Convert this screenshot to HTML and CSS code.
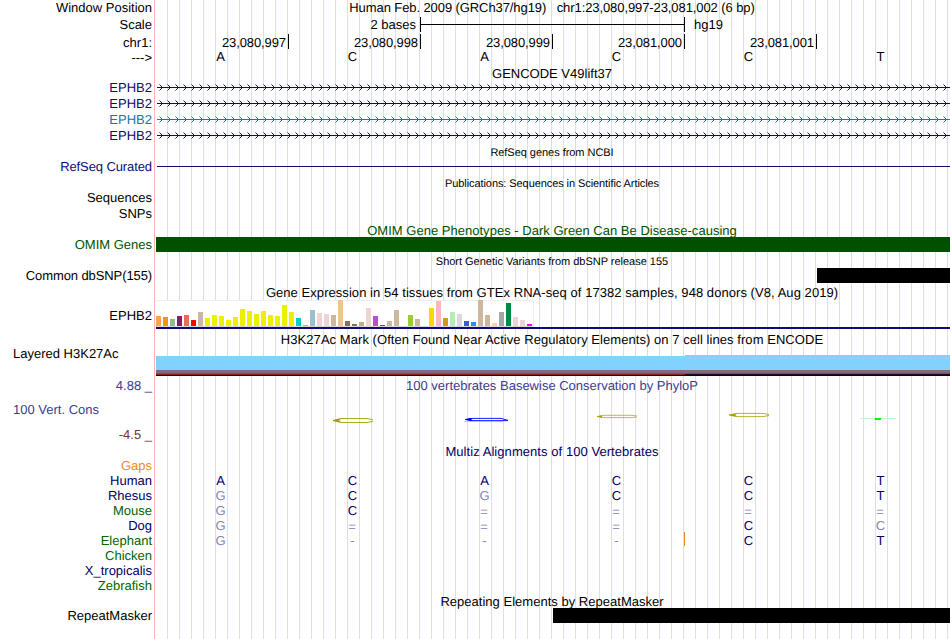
FILE: index.html
```html
<!DOCTYPE html>
<html lang="en">
<head>
<meta charset="utf-8">
<title>Genome Browser</title>
<link rel="stylesheet" href="styles.css">
</head>
<body>
<main class="browser" id="browser"></main>
<script src="tracks.js"></script>
</body>
</html>
```
FILE: styles.css
```css
* { box-sizing: border-box; }
body { margin: 0; background: #fff; font-family: "Liberation Sans", sans-serif; font-size: 13px; color: #000; text-rendering: geometricPrecision; }
.browser {
  width: 950px; height: 639px; overflow: hidden;
  display: flex; flex-direction: column;
  background:
    linear-gradient(#ffb4b4, #ffb4b4) 154px 0 / 1px 100% no-repeat,
    repeating-linear-gradient(90deg, #dcdcf8 0, #dcdcf8 1px, transparent 1px, transparent 12px) 167px 0 / 783px 100% no-repeat;
}
.row { display: grid; grid-template-columns: 156px 794px; flex: none; white-space: pre; }
.label { padding-right: 4px; text-align: right; }
.label.left { text-align: left; padding-left: 13px; }
.label.tight { letter-spacing: -.1px; }
.label.low { padding-top: 1px; margin-bottom: -1px; }
.track { display: flex; min-width: 0; }
.title { flex: 1; text-align: center; padding-right: 2px; }
.title.low { margin-top: 1px; }
.title.lower { margin-top: 2px; }
.small { font-size: 11px; }
.navy { color: #0c0c78; }
.sky { color: #0c78b4; }
.green { color: #005000; }
.leaf { color: #006400; }
.deep { color: #000064; }
.slate { color: #3c3c8c; }
.maroon { color: #783232; }
.orange { color: #e68c14; }
.dim { color: #8282b4; }
.gap { padding: 1px 1px 0 0; margin-bottom: -1px; }
.bases { display: grid; grid-template-columns: repeat(6, 132px); margin-left: -2px; text-align: center; padding-left: .5px; }
.bases.raised { margin-top: -1px; }
.ticks { display: grid; grid-template-columns: repeat(5, 132px); margin-left: 1px; }
.tick { border-right: 1px solid #000; height: 15px; text-align: right; padding-right: 2px; letter-spacing: -.1px; }
.scale { display: grid; grid-template-columns: 264px 265px auto; }
.scale-text { text-align: right; padding-right: 4px; }
.ruler { height: 15px; margin-top: 1px; border: solid #000; border-width: 0 1px; display: flex; align-items: center; }
.ruler::before { content: ""; height: 1px; flex: 1; background: #000; }
.hg { padding-left: 9px; }
.arrows { width: 793px; height: 8px; margin: 4px 0 0 1px; display: block; }
.line { height: 1px; flex: 1; margin: 6px 0 0 1px; background: #0c0c78; }
.block { height: 15px; flex: 1; background: #000; }
.block.omim { background: #005000; }
.block.snp { margin-left: 661px; }
.block.rmsk { margin-left: 397px; }
.gtex { display: block; height: 29px; border-bottom: 2px solid #0c0c78; }
.bars { width: 378px; height: 27px; display: flex; align-items: flex-end; gap: 2px; background: #fff; border: solid #eee; border-width: 1px 1px 1px 0; border-bottom-color: #d8d8d8; }
.bar { width: 5px; flex: none; }
.layers { align-items: flex-start; }
.layer-a { width: 529px; height: 20px; margin-top: 9px; background: linear-gradient(#82d2ff 14px, #82697d 14px, #82697d 17px, #825041 17px, #825041 18px, #8c2323 18px, #8c2323 19px, #14001e 19px); }
.layer-b { flex: 1; height: 21px; margin-top: 8px; background: linear-gradient(#82d2ff 15px, #82697d 15px, #82697d 18px, #825041 18px, #825041 19px, #2d1423 19px, #14001e 20px); }
.spacer { height: 17px; }
.cons { display: flex; flex-direction: column; line-height: 15px; }
.cons .mid { margin: 9px 0 10px; text-align: left; padding-left: 13px; }
.cons-track { display: block; line-height: 15px; }
.cons-track .title { height: 15px; }
.phylo { display: block; width: 794px; height: 50px; }
.insert { position: relative; }
.insert::after { content: ""; position: absolute; right: -2.5px; top: -1px; width: 1px; height: 14px; background: #e68c14; }
```
FILE: tracks.js
```js
const root = document.getElementById('browser');
// Adds one browser row: left label plus its track area.
function row(height, label, labelClass, trackClass, track) {
  root.insertAdjacentHTML('beforeend',
    `<div class="row" style="height:${height}px;line-height:${height}px">` +
    `<div class="label ${labelClass}">${label}</div><div class="track ${trackClass}">${track}</div></div>`);
}
const title = (h, text, cls = '', ls = 0) =>
  row(h, '', '', '', `<span class="title ${cls}" style="letter-spacing:${ls}px">${text}</span>`);
const bases = (s, insert = -1) => s.split(' ').map((c, i) => {
  const dim = /[a-z=-]/.test(c);
  return `<span class="${dim ? 'dim' : ''} ${c === '=' ? 'gap' : ''} ${i === insert ? 'insert' : ''}">${c.toUpperCase()}</span>`;
}).join('');

title(16, 'Human Feb. 2009 (GRCh37/hg19)   chr1:23,080,997-23,081,002 (6 bp)', '', -.09);
root.lastChild.firstChild.textContent = 'Window Position';
row(18, 'Scale', '', 'scale', '<span class="scale-text">2 bases</span><span class="ruler"></span><span class="hg">hg19</span>');
row(17, 'chr1:', '', 'ticks', ['23,080,997', '23,080,998', '23,080,999', '23,081,000', '23,081,001'].map(t => `<span class="tick">${t}</span>`).join(''));
row(14, '---&gt;', '', 'bases raised', bases('A C A C C T'));
title(15, 'GENCODE V49lift37', 'low');
for (const c of ['navy', 'navy', 'sky', 'navy']) {
  let heads = '';
  for (let x = 2; x < 792; x += 8) heads += `M${x + .5} .5l3 3l-3 3`;
  row(16, 'EPHB2', c, c, `<svg class="arrows" viewBox="0 0 793 8"><path d="M0 3.5H793" stroke="currentColor"/><path d="${heads}" fill="none" stroke="currentColor"/></svg>`);
}
title(16, 'RefSeq genes from NCBI', 'small low', -.04);
row(14, 'RefSeq Curated', 'navy tight', '', '<span class="line"></span>');
title(16, 'Publications: Sequences in Scientific Articles', 'small lower', -.08);
row(16, 'Sequences', '', '', '');
row(16, 'SNPs', '', '', '');
title(15, 'OMIM Gene Phenotypes - Dark Green Can Be Disease-causing', 'green low', .02);
row(15, 'OMIM Genes', 'green', '', '<span class="block omim"></span>');
title(16, 'Short Genetic Variants from dbSNP release 155', 'small lower', -.02);
row(15, 'Common dbSNP(155)', 'tight', '', '<span class="block snp"></span>');
title(17, 'Gene Expression in 54 tissues from GTEx RNA-seq of 17382 samples, 948 donors (V8, Aug 2019)', 'low', .055);

const expression = [
  [10, 'ffa54f'], [9, 'ee9a00'], [7, '8fbc8f'], [10, '8b1c62'], [11, 'ee6a50'], [6, 'ff0000'], [14, 'cdb79e'],
  ...[8, 11, 10, 6, 9, 17, 15, 12, 15, 11, 10, 21, 14].map(h => [h, 'eeee00']),
  [8, '00cdcd'], [1, 'ee82ee'], [16, '9ac0cd'], [13, 'eed5d2'], [12, 'eed5d2'], [11, 'cdb79e'], [26, 'eec591'],
  [5, '8b7355'], [2, '8b7355'], [4, 'cdaa7d'], [18, 'eed5d2'], [10, 'b452cd'], [1, '7a378b'], [5, 'cdb79e'],
  [16, 'cdb79e'], [0, 'fff'], [11, '9acd32'], [7, 'cdb79e'], [0, 'fff'], [18, 'ffd700'], [25, 'ffb6c1'],
  [8, 'cd9b1d'], [14, 'b4eeb4'], [12, 'd9d9d9'], [5, '3a5fcd'], [4, '1e90ff'], [26, 'cdb79e'], [11, 'cdb79e'],
  [3, 'ffd39b'], [14, 'a6a6a6'], [23, '008b45'], [9, 'eed5d2'], [6, 'eed5d2'], [2, 'ff00ff']];
row(29, 'EPHB2', 'low', 'gtex', '<div class="bars">' + expression.map(([h, c]) => `<i class="bar" style="height:${h}px;background:#${c}"></i>`).join('') + '</div>');
title(18, 'H3K27Ac Mark (Often Found Near Active Regulatory Elements) on 7 cell lines from ENCODE', 'lower', .055);
row(14, 'Layered H3K27Ac', 'left', 'layers', '<span class="layer-a"></span><span class="layer-b"></span>');
root.insertAdjacentHTML('beforeend', '<div class="row spacer"></div>');
row(65, '<div class="slate">4.88 _</div><div class="slate mid">100 Vert. Cons</div><div class="maroon">-4.5 _</div>', 'cons', 'cons-track',
  `<div class="title slate">100 vertebrates Basewise Conservation by PhyloP</div>` +
  `<svg class="phylo" viewBox="156 393 794 50" fill="none">
<g stroke="#a0a000"><path d="M333 420.5L341 418.5H367L373 419.8M333 420.5L341 422.5H367L373 421.3" stroke-width=".9"/><path d="M333 420.5l5-1.5h3l-2 1.5 2 1.5h-3z" fill="#a0a000" stroke="none"/>
<path d="M597 416.5L604 415.3H631L637 416M597 416.5L604 417.6H631L637 417" stroke-width=".7"/><path d="M597 416.5l5-1.2v2.4z" fill="#a0a000" stroke="none"/>
<path d="M729 415L737 413.4H763L769 414.6M729 415L737 416.6H763L769 415.6" stroke-width=".8"/><path d="M729 415l5-1.3h3l-2 1.3 2 1.3h-3z" fill="#a0a000" stroke="none"/></g>
<path d="M464 421.5H503" stroke="#ffaaaa" stroke-width=".8"/>
<path d="M465 419.5L473 418.4H501L508 420.4M465 419.5L473 420.6H508" stroke="#00f" stroke-width=".9"/><path d="M465 419.5l5-1.4h3l-2 1.4 2 1.4h-3z" fill="#00f"/>
<path d="M860 418.5H896" stroke="#b4f5b4" stroke-width=".8"/><path d="M875 419H881" stroke="#0f0" stroke-width="2"/></svg>`);
title(15, 'Multiz Alignments of 100 Vertebrates', 'deep low', .06);
row(15, 'Gaps', 'orange', '', '');
row(15, 'Human', 'deep', 'bases deep', bases('A C A C C T'));
row(15, 'Rhesus', 'deep', 'bases deep', bases('g C g C C T'));
row(15, 'Mouse', 'leaf', 'bases deep', bases('g C = = = ='));
row(15, 'Dog', 'deep', 'bases deep', bases('g = = = C c'));
row(15, 'Elephant', 'leaf', 'bases deep', bases('g - - - C T', 3));
row(15, 'Chicken', 'leaf', '', '');
row(15, 'X_tropicalis', 'deep', '', '');
row(15, 'Zebrafish', 'leaf', '', '');
title(15, 'Repeating Elements by RepeatMasker', 'low', .02);
row(15, 'RepeatMasker', '', '', '<span class="block rmsk"></span>');
```
